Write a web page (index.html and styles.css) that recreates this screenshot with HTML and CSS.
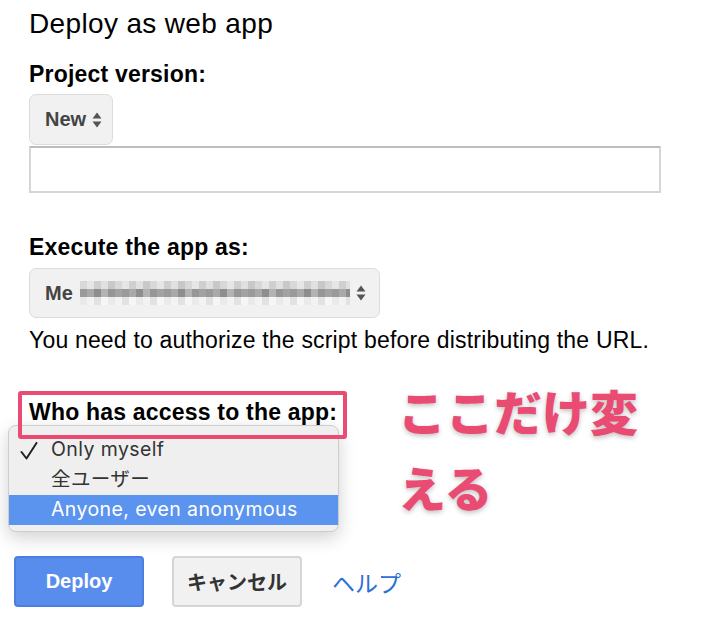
FILE: index.html
```html
<!DOCTYPE html>
<html lang="ja">
<head>
<meta charset="utf-8">
<title>Deploy as web app</title>
<link rel="stylesheet" href="styles.css">
</head>
<body>
<div class="page">
<h1 class="title">Deploy as web app</h1>

<div class="label label-first">Project version:</div>
<div class="select select-small">
<span>New</span>
<svg class="arrows" width="10" height="16" viewBox="0 0 10 16"><path d="M5 0.5 L9.5 6.5 L0.5 6.5 Z M0.5 9.5 L9.5 9.5 L5 15.5 Z" fill="#555"/></svg>
</div>
<div class="textbox"></div>

<div class="label label-gap">Execute the app as:</div>
<div class="select select-wide">
<span>Me</span>
<span class="blur">
<span class="blur-row blur-top"></span>
<span class="blur-row blur-mid"></span>
<span class="blur-row blur-bot"></span>
</span>
<svg class="arrows" width="10" height="16" viewBox="0 0 10 16"><path d="M5 0.5 L9.5 6.5 L0.5 6.5 Z M0.5 9.5 L9.5 9.5 L5 15.5 Z" fill="#555"/></svg>
</div>
<p class="note">You need to authorize the script before distributing the URL.</p>

<div class="access">
<div class="label marked">Who has access to the app:</div>
<ul class="menu">
<li class="checked"><svg class="check" width="18" height="18" viewBox="0 0 18 18"><path d="M1.5 10 L6.5 16.5 L16.5 1" fill="none" stroke="#222" stroke-width="2" stroke-linecap="round" stroke-linejoin="round"/></svg>Only myself</li>
<li>全ユーザー</li>
<li class="active">Anyone, even anonymous</li>
</ul>
</div>

<div class="actions">
<button class="btn btn-primary">Deploy</button>
<button class="btn">キャンセル</button>
<a href="#" class="help">ヘルプ</a>
</div>
</div>

<div class="callout">ここだけ変える</div>
</body>
</html>
```

FILE: styles.css
```css
* {
margin: 0;
padding: 0;
box-sizing: border-box;
}

body {
background-color: #fff;
color: #000;
font-family: "Liberation Sans", Arial, "Noto Sans CJK JP", sans-serif;
position: relative;
width: 702px;
height: 620px;
overflow: hidden;
}

.page {
padding: 8px 0 0 29px;
}

.title {
font-size: 28px;
font-weight: normal;
line-height: 32px;
letter-spacing: 0.35px;
}

.label {
font-size: 23px;
font-weight: bold;
line-height: 26px;
letter-spacing: 0.2px;
}

.label-first {
margin-top: 21px;
}

.label-gap {
margin-top: 41px;
}

.select {
display: flex;
align-items: center;
background-color: #f1f1f1;
border: 1px solid #dcdcdc;
border-radius: 7px;
color: #444;
font-size: 20px;
font-weight: bold;
}

.select-small {
width: 84px;
height: 51px;
margin-top: 7px;
padding-left: 15px;
}

.select-small .arrows {
margin-left: 6px;
}

.select-wide {
width: 351px;
height: 50px;
margin-top: 8px;
padding-left: 15px;
}

.select-wide .arrows {
margin-left: 6px;
}

.blur {
display: flex;
flex-direction: column;
width: 270px;
height: 25px;
margin-left: 7px;
}

.blur-row {
flex: 1;
}

.blur-top {
background: repeating-linear-gradient(90deg, #d8d8d8 0 7px, #e6e6e6 7px 14px, #cfcfcf 14px 21px, #e0e0e0 21px 28px, #c8c8c8 28px 35px);
}

.blur-mid {
background: repeating-linear-gradient(90deg, #9a9a9a 0 7px, #a9a9a9 7px 14px, #8e8e8e 14px 21px, #b3b3b3 21px 28px, #969696 28px 35px, #a2a2a2 35px 42px);
}

.blur-bot {
background: repeating-linear-gradient(90deg, #eaeaea 0 7px, #f3f3f3 7px 14px, #e2e2e2 14px 21px, #f6f6f6 21px 28px);
}

.textbox {
width: 632px;
height: 47px;
margin-top: 1px;
border: 2px solid #d6d6d6;
border-top-color: #bdbdbd;
}

.note {
font-size: 23px;
line-height: 26px;
margin-top: 9px;
letter-spacing: 0.18px;
}

.access {
position: relative;
margin-top: 38px;
}

.marked {
width: 329px;
height: 48px;
margin-left: -11px;
padding: 4px 0 0 7px;
border: 4px solid #e94b73;
border-radius: 3px;
position: relative;
z-index: 2;
}

.menu {
list-style: none;
position: absolute;
left: -21px;
top: 34px;
width: 331px;
height: 107px;
padding-top: 9px;
background-color: #efefef;
border: 1px solid #cdcdcd;
border-radius: 8px;
box-shadow: 0 6px 18px rgba(0, 0, 0, 0.18);
font-family: Inter, "Noto Sans CJK JP", sans-serif;
font-size: 19.5px;
color: #333;
overflow: hidden;
z-index: 1;
}

.menu li {
height: 30px;
line-height: 29px;
padding-left: 42px;
position: relative;
letter-spacing: 0.4px;
}

.menu .check {
position: absolute;
left: 11px;
top: 7px;
}

.menu .active {
background-color: #5b94ee;
color: #fff;
}

.actions {
display: flex;
align-items: center;
margin: 117px 0 0 -15px;
}

.btn {
width: 130px;
height: 51px;
margin-right: 28px;
border: 2px solid #d6d6d6;
border-radius: 4px;
background-color: #f1f1f1;
color: #333;
font-family: "Liberation Sans", Arial, "Noto Sans CJK JP", sans-serif;
font-size: 20px;
font-weight: bold;
}

.btn-primary {
background-color: #598ded;
border-color: #4a7fe0;
color: #fff;
}

.help {
margin-left: 2px;
color: #2f6fd6;
font-family: "Noto Sans CJK JP", sans-serif;
font-size: 23px;
text-decoration: none;
}

.callout {
position: absolute;
left: 398px;
top: 372px;
width: 270px;
font-family: "Noto Sans CJK JP", sans-serif;
font-size: 48px;
font-weight: 900;
line-height: 76px;
color: #e94b73;
-webkit-text-stroke: 7px #fff;
paint-order: stroke fill;
text-shadow: 0 2px 5px rgba(0, 0, 0, 0.25);
}
```
